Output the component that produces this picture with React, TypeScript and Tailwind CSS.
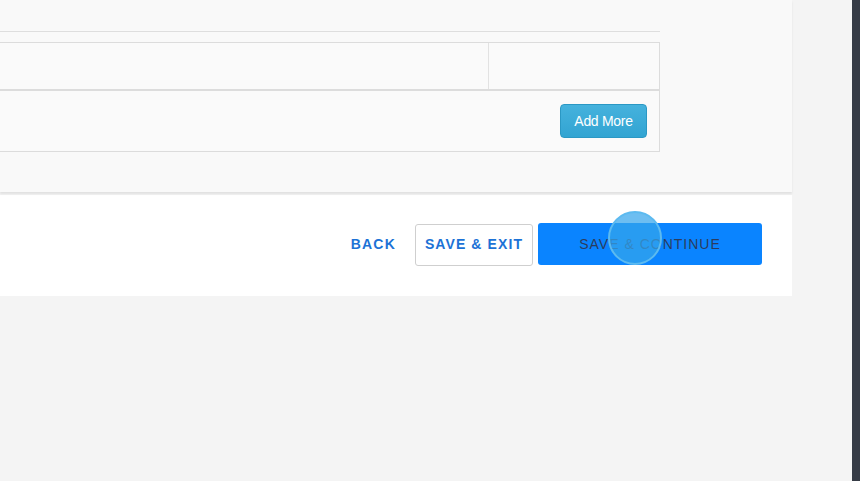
import React from "react";

/** Bottom part of a multi-step form: table editor card and the wizard footer */
function TableCard() {
  return (
    <div className="relative h-[192px] bg-[#f9f9f9] shadow-[0_2px_2px_rgba(0,0,0,0.08)]">
      <div className="w-[660px] pt-[31px]">
        <div className="h-px bg-[#dedede]" />
        <div className="mt-[10px] border border-l-0 border-[#dcdcdc] bg-[#fafafa]">
          {/* empty row */}
          <div className="flex h-[48px] border-b-2 border-[#dcdcdc]">
            <div className="w-[489px] border-r border-[#e2e2e2]" />
            <div className="flex-1" />
          </div>
          {/* action row */}
          <div className="flex h-[60px] items-center justify-end pr-[12px]">
            <button className="h-[34px] w-[87px] rounded-[4px] border border-[#2b98c4] bg-gradient-to-b from-[#45b2dd] to-[#32a4d2] text-[14px] tracking-[-0.3px] text-white [font-family:'Liberation_Sans',Arial,sans-serif]">
              Add More
            </button>
          </div>
        </div>
      </div>
    </div>
  );
}

function WizardFooter() {
  return (
    <div className="mt-[3px] flex h-[101px] items-center justify-end bg-white pr-[30px] pb-[2px] [font-family:'Liberation_Sans',Arial,sans-serif]">
      <button className="mr-[19px] text-[14px] font-bold tracking-[1.2px] text-[#1c72d6]">BACK</button>
      <button className="mr-[5px] h-[42px] w-[118px] rounded-[3px] border border-[#cfcfcf] bg-white text-[14px] font-bold tracking-[1.1px] text-[#1c72d6]">
        SAVE &amp; EXIT
      </button>
      <div className="relative">
        <button className="mb-[1px] h-[42px] w-[224px] rounded-[3px] bg-[#0a84ff] text-[14px] tracking-[1px] text-[#2b3c5e]">
          SAVE &amp; CONTINUE
        </button>
        {/* click indicator */}
        <div className="pointer-events-none absolute left-[70px] top-[-12px] h-[54px] w-[54px] rounded-full border-2 border-[#5cbaf0] bg-[rgba(52,165,236,0.72)]" />
      </div>
    </div>
  );
}

export default function App() {
  return (
    <div className="flex h-[481px] w-[860px] overflow-hidden bg-[#f4f4f4]">
      <div className="w-[792px]">
        <TableCard />
        <WizardFooter />
      </div>
      <div className="flex-1" />
      <div className="w-[8px] bg-[#363c46]" />
    </div>
  );
}
